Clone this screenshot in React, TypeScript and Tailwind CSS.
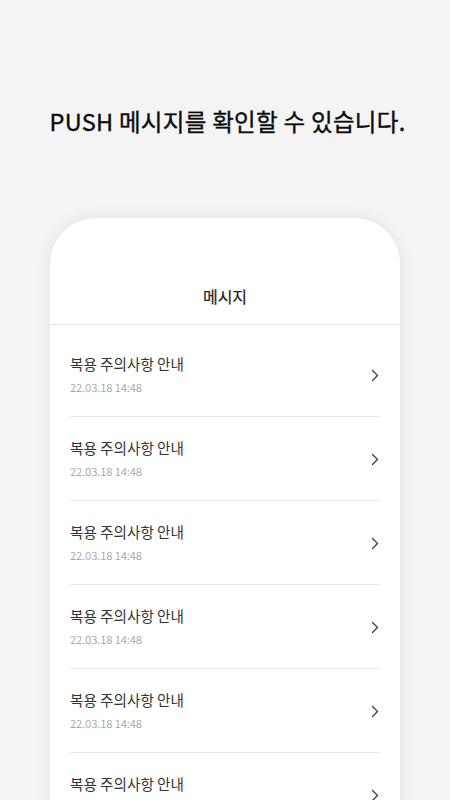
import React from "react";

const rows = Array.from({ length: 6 });

function Chevron() {
  return (
    <svg width="8" height="13" viewBox="0 0 8 13" fill="none">
      <path d="M1.5 1.5L6.5 6.5L1.5 11.5" stroke="#444" strokeWidth="1.4" strokeLinecap="round" strokeLinejoin="round" />
    </svg>
  );
}

export default function App() {
  return (
    <div
      className="w-[450px] h-[800px] overflow-hidden bg-[#f4f4f4] flex flex-col items-center"
      style={{ fontFamily: '"Noto Sans CJK KR", "Noto Sans", sans-serif' }}
    >
      <h1 className="mt-[105px] ml-[5px] text-[23.5px] leading-[32px] font-normal text-[#0a0a0a] tracking-[0.3px] [-webkit-text-stroke:0.35px_#0a0a0a]">
        PUSH 메시지를 확인할 수 있습니다.
      </h1>
      <div className="mt-[81px] w-[350px] flex-1 bg-white rounded-t-[46px] shadow-[0_0_16px_rgba(0,0,0,0.08)]">
        <div className="pt-[68px] pb-[18px] border-b border-[#e6e6e6] text-center text-[16px] leading-[20px] text-[#222] [-webkit-text-stroke:0.2px_#222]">
          메시지
        </div>
        <div className="px-[20px] pt-[8px]">
          {rows.map((_, i) => (
            <div key={i} className="flex items-center justify-between pt-[21px] pb-[20px] border-b border-[#e8e8e8]">
              <div className="flex flex-col gap-[4px]">
                <div className="text-[14.6px] leading-[20px] text-[#333]">복용 주의사항 안내</div>
                <div className="text-[11.3px] leading-[18px] text-[#aaaaaa] tracking-[-0.2px]">22.03.18 14:48</div>
              </div>
              <div className="mr-[1px]">
                <Chevron />
              </div>
            </div>
          ))}
        </div>
      </div>
    </div>
  );
}
